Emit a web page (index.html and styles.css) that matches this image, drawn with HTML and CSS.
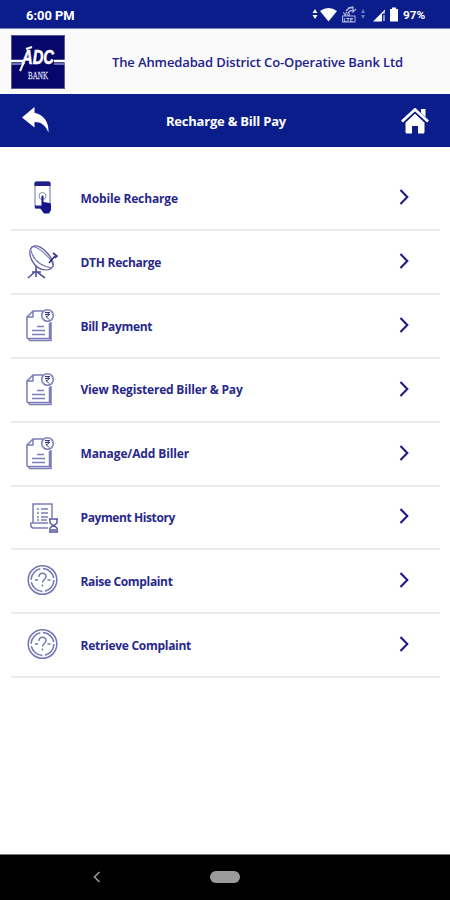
FILE: index.html
```html
<!DOCTYPE html>
<html lang="en">
<head>
<meta charset="utf-8">
<title>Recharge &amp; Bill Pay</title>
<link rel="stylesheet" href="styles.css">
</head>
<body>
<svg width="0" height="0" class="defs">
  <symbol id="bill" viewBox="0 0 36 36">
    <g fill="none" stroke="#7c7cb8" stroke-width="1.500">
      <path d="M19 3H9L3 9v20.500l3 3h21V14M3 9h6V3M3.500 30.500h22V15"/>
      <path d="M13 18.500h7M8 22.500h13M8 26.500h13"/>
      <circle cx="23.500" cy="7.500" r="5.800" fill="#fff"/>
    </g>
    <path d="M21 4.500h5M21 6.500h5M22 4.500c4 0 4 4 0 4l3 3" fill="none" stroke="#30308f" stroke-width="1"/>
  </symbol>
  <symbol id="query" viewBox="0 0 36 36">
    <g fill="none" stroke="#7474b4">
      <circle cx="18.500" cy="17" r="14.300" stroke-width="1.500"/>
      <circle cx="18.500" cy="17" r="11.400" stroke-width="1.500" stroke-dasharray="15.400 2.500"/>
      <path d="M15 14c0-5 7-5 7-.5 0 3-3.500 3-3.500 6M18.500 21.500v2M11 17h3M23.500 17h3" stroke-width="1.500"/>
    </g>
  </symbol>
  <symbol id="chevron" viewBox="0 0 12 18">
    <path d="M2.500 2L9.300 9 2.500 16" fill="none" stroke="#21188a" stroke-width="2.100"/>
  </symbol>
</svg>
<div class="screen">
  <div class="status">
    <span class="time">6:00 PM</span>
    <svg class="signals" width="86" height="20" viewBox="312 5 86 20">
      <g fill="#fff">
        <path d="M312.500 13l2.500-4 2.500 4zM312.500 15l2.500 4 2.500-4z"/>
        <path d="M320 11q8.500-6 17 0L328.500 21.500z"/>
        <path d="M373 21.500L385 9.500V14h-3v7.500z"/>
        <path d="M390 9h2V7.500h4V9h2v12.500h-8z"/>
      </g>
      <path d="M382 14l3-3v3M383 15h2v6h-2z" fill="#8990cc"/>
      <g fill="none" stroke="#aeb4df">
        <path d="M346 11q3-4 7-3.500M348 13q2-3 5-2.500" stroke-width="1.500"/>
        <path d="M348 8l5-1v5l3-3" stroke-width="1.200"/>
        <rect x="342.500" y="16" width="12.500" height="6"/>
      </g>
      <text x="343" y="15.500" class="tiny">Vo</text><text x="343.500" y="21.500" class="tiny">LTE</text>
      <path d="M361 13l2-4 2 4zM361 15l2 4 2-4z" fill="#6f78c4"/>
    </svg>
    <span class="charge">97%</span>
  </div>
  <header class="brand">
    <svg width="54" height="54" viewBox="0 0 54 54">
      <rect x=".5" y=".5" width="53" height="53" fill="#06066b" stroke="#555891"/>
      <path d="M0 26h13M43 26h11" stroke="#fff" stroke-width="2.500"/>
      <path d="M0 29h11M43 29h11" stroke="#8f93c2" stroke-width="1.500"/>
      <path d="M9 36l4-9M15 14l6-2" stroke="#fff" stroke-width="2"/>
      <text x="11" y="29" class="logo-name" textLength="32" lengthAdjust="spacingAndGlyphs">ADC</text>
      <text x="17" y="43.500" class="logo-bank" textLength="20" lengthAdjust="spacingAndGlyphs">BANK</text>
    </svg>
    <span class="bank">The Ahmedabad District Co-Operative Bank Ltd</span>
  </header>
  <nav class="bar">
    <svg width="30" height="28" viewBox="0 0 30 28"><path d="M1 10.500L13.500 0v5.800C23 8 28 15 27.500 25.500 24.500 18 20 15 13.500 15v5.500z" fill="#fff"/></svg>
    <h1>Recharge &amp; Bill Pay</h1>
    <svg width="28" height="26" viewBox="0 0 28 26"><path d="M14 5.500l9.500 9V24q0 1.500-1.500 1.500h-5V18h-6v7.500H6Q4.500 25.500 4.500 24v-9.500z" fill="#fff"/><path d="M1 13.500L14 1.500l13 12" fill="none" stroke="#fff" stroke-width="2.800"/><path d="M4 14.200l10-9.200 10 9.200" fill="none" stroke="#0a1d8a" stroke-width="1"/><path d="M20 1h4.500v8L20 5z" fill="#fff"/></svg>
  </nav>
  <main class="list">
    <div class="row">
      <svg class="icon" viewBox="0 0 36 36">
        <rect x="11" y="2" width="15" height="26" rx="1.500" fill="#fff" stroke="#8888bf" stroke-width="1.200"/>
        <path d="M10.500 6V3q0-1.500 1.500-1.500h13q1.500 0 1.500 1.500v3z" fill="#20208c"/>
        <path d="M11 25.500h7v3h-7z" fill="#20208c"/>
        <circle cx="18.500" cy="16" r="3.500" fill="none" stroke="#8888bf"/>
        <path d="M17.500 16q1-1 2 0v6l6 1q1.500 0 1.500 2v5l-2 3.500h-5L16 28v-2l1.500 1z" fill="#14148a"/>
      </svg>
      <span class="label w1">Mobile Recharge</span><svg class="go"><use href="#chevron"/></svg>
    </div>
    <div class="row">
      <svg class="icon" viewBox="0 0 36 36">
        <g fill="none" stroke="#54549f" stroke-width="1.200">
          <path d="M8 3C2 8 9 26 22 26q5 0 7-4C31 15 16-2 8 3z"/>
          <path d="M8 3c5-2 22 13 21 20M7 6c2 10 10 16 21 18" stroke="#7777b5"/>
          <path d="M25 19l6-7M29 9l4 3-2 2" stroke="#30308f" stroke-width="1.600"/>
          <path d="M12 22v11M4 34l8-7 9 7M8 28h9" stroke-width="1.600"/>
        </g>
      </svg>
      <span class="label w2">DTH Recharge</span><svg class="go"><use href="#chevron"/></svg>
    </div>
    <div class="row"><svg class="icon"><use href="#bill"/></svg><span class="label w3">Bill Payment</span><svg class="go"><use href="#chevron"/></svg></div>
    <div class="row"><svg class="icon"><use href="#bill"/></svg><span class="label w4">View Registered Biller &amp; Pay</span><svg class="go"><use href="#chevron"/></svg></div>
    <div class="row"><svg class="icon"><use href="#bill"/></svg><span class="label w5">Manage/Add Biller</span><svg class="go"><use href="#chevron"/></svg></div>
    <div class="row">
      <svg class="icon" viewBox="0 0 36 36">
        <g fill="none" stroke="#7c7cb8" stroke-width="1.500">
          <path d="M9 24V5h19v14M24 29H9q-3-1-2-5h17"/>
          <path d="M13 10h2M17 10h7M13 14h2M17 14h7M13 18h2M17 18h7M13 21h2M17 21h6"/>
          <path d="M25 20h9M25 33h9M26 20v4l3 2.500-3 2.500v4M33 20v4l-3 2.500 3 2.500v4M27 31h5" stroke="#5555a2"/>
        </g>
      </svg>
      <span class="label w6">Payment History</span><svg class="go"><use href="#chevron"/></svg>
    </div>
    <div class="row"><svg class="icon"><use href="#query"/></svg><span class="label w7">Raise Complaint</span><svg class="go"><use href="#chevron"/></svg></div>
    <div class="row"><svg class="icon"><use href="#query"/></svg><span class="label w8">Retrieve Complaint</span><svg class="go"><use href="#chevron"/></svg></div>
  </main>
  <footer class="system">
    <svg width="8" height="12" viewBox="0 0 8 12"><path d="M6.500 1L1.500 6l5 5" fill="none" stroke="#999" stroke-width="1.600"/></svg>
    <span class="pill"></span>
  </footer>
</div>
</body>
</html>
```
FILE: styles.css
```css
* { box-sizing: border-box; }
body { margin: 0; background: #fff; font-family: "Open Sans", sans-serif; }
.defs { display: none; }
.screen { width: 450px; height: 900px; display: flex; flex-direction: column; overflow: hidden; }
.status { height: 29px; background: #0a1d8a; display: flex; align-items: center; padding: 2px 0 0 26px; color: #fff; font: bold 12.900px Roboto, sans-serif; border-bottom: 1px solid #7c84c0; }
.time { width: 286px; }
.signals { flex: none; margin: -1px 5px 0 0; }
.charge { font-size: 11.800px; }
.tiny { font: bold 6px Roboto, sans-serif; fill: #c3c7e8; }
.brand { height: 65px; background: #fafafb; display: flex; align-items: center; padding-left: 11px; }
.brand svg { flex: none; margin-right: 47px; margin-top: 1px; overflow: visible; }
.bank { color: #21218a; font-size: 13px; font-weight: 600; letter-spacing: -.12px; white-space: nowrap; }
.logo-name { font: italic bold 21px "Liberation Sans", sans-serif; fill: #fff; stroke: #fff; stroke-width: .6px; }
.logo-bank { font: 10.500px "Liberation Serif", serif; fill: #d5d5ea; stroke: #d5d5ea; stroke-width: .3px; }
.bar { height: 53px; background: #0a1d8a; display: flex; align-items: center; justify-content: space-between; padding: 0 21px; }
.bar h1 { margin: 0; color: #fff; font-size: 13px; font-weight: 700; letter-spacing: -.22px; white-space: nowrap; }
.list { flex: 1; padding: 20.600px 10px 0 11px; }
.row { height: 63.800px; border-bottom: 2px solid #ebebed; display: flex; align-items: center; padding: 0 29px 0 13px; }
.icon { width: 36px; height: 36px; flex: none; margin-right: 20.500px; }
.label { flex: 1; color: #28288c; font-size: 12px; font-weight: 700; white-space: nowrap; }
.w1 { letter-spacing: -.14px; }
.w2 { letter-spacing: -.27px; }
.w3 { letter-spacing: -.35px; }
.w4 { letter-spacing: -.19px; }
.w5 { letter-spacing: -.12px; }
.w6 { letter-spacing: -.4px; }
.w7 { letter-spacing: -.34px; }
.w8 { letter-spacing: -.28px; }
.go { width: 12px; height: 18px; flex: none; margin: -2px 1px 0 0; }
.system { height: 46px; background: #000; border-top: 1px solid #777; display: flex; align-items: center; padding: 0 0 1px 93px; }
.pill { width: 30px; height: 12px; border-radius: 6px; background: #9b9b9b; margin-left: 109px; }
```
